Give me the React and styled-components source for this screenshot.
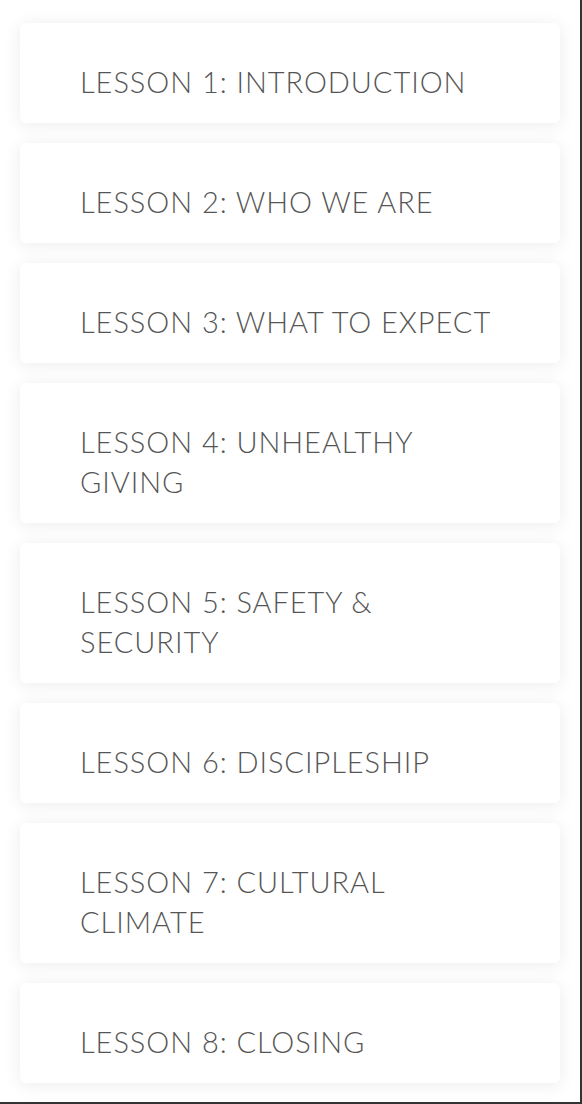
import styled, { createGlobalStyle } from "styled-components";

const GlobalStyle = createGlobalStyle`
  html, body {
    margin: 0;
    padding: 0;
    background: #ffffff;
  }
  * {
    box-sizing: border-box;
  }
`;

const Page = styled.div`
  width: 100%;
  height: 100vh;
  padding: 23px 20px 0 20px;
  display: flex;
  flex-direction: column;
  gap: 20px;
  background: #ffffff;
  border-right: 2px solid #333333;
  border-bottom: 2px solid #333333;
  overflow: hidden;
`;

const LessonCard = styled.div`
  width: 540px;
  padding: 39px 60px 21px 60px;
  background: #ffffff;
  border-radius: 6px;
  box-shadow: 0 2px 18px rgba(0, 0, 0, 0.08);
`;

const LessonTitle = styled.div`
  font-family: "Lato", "Liberation Sans", sans-serif;
  font-weight: 300;
  font-size: 29px;
  line-height: 40px;
  letter-spacing: 0.95px;
  text-transform: uppercase;
  color: #555555;
`;

const lessons = [
  "Lesson 1: Introduction",
  "Lesson 2: Who We Are",
  "Lesson 3: What to Expect",
  "Lesson 4: Unhealthy Giving",
  "Lesson 5: Safety & Security",
  "Lesson 6: Discipleship",
  "Lesson 7: Cultural Climate",
  "Lesson 8: Closing",
];

export default function App() {
  return (
    <>
      <GlobalStyle />
      <Page>
        {lessons.map((title) => (
          <LessonCard key={title}>
            <LessonTitle>{title}</LessonTitle>
          </LessonCard>
        ))}
      </Page>
    </>
  );
}
